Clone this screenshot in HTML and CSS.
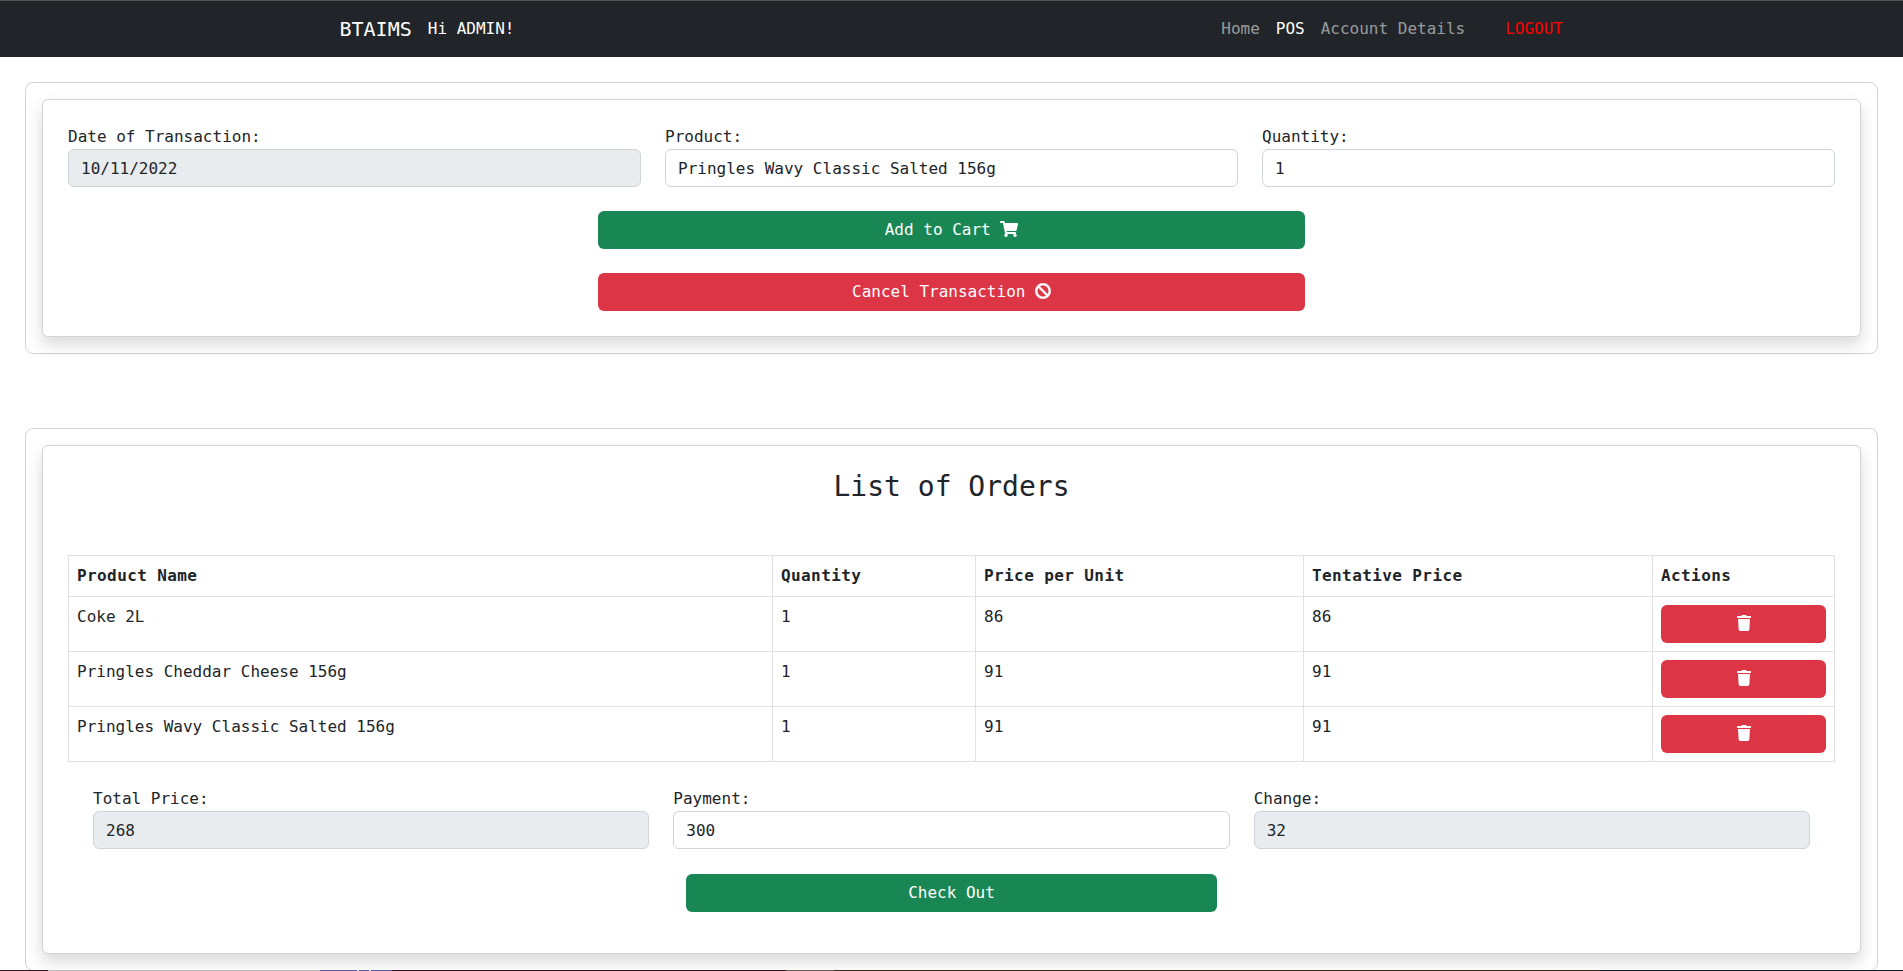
FILE: index.html
```html
<!DOCTYPE html>
<html lang="en">
<head>
<meta charset="utf-8">
<title>BTAIMS POS</title>
<link rel="stylesheet" href="styles.css">
</head>
<body>
<nav class="navbar">
  <div class="nav-left">
    <a class="brand">BTAIMS</a>
    <span class="greeting">Hi ADMIN!</span>
  </div>
  <div class="nav-right">
    <a class="nav-link">Home</a>
    <a class="nav-link active">POS</a>
    <a class="nav-link">Account Details</a>
    <a class="nav-link logout">LOGOUT</a>
  </div>
</nav>
<main class="page">
  <section class="outer">
    <div class="inner">
      <div class="fields">
        <div class="field"><label>Date of Transaction:</label><input class="input" value="10/11/2022" disabled></div>
        <div class="field"><label>Product:</label><input class="input" value="Pringles Wavy Classic Salted 156g"></div>
        <div class="field"><label>Quantity:</label><input class="input" value="1"></div>
      </div>
      <div class="actions">
        <button class="btn green wide">Add to Cart
          <svg class="icon" viewBox="0 0 576 512"><path d="M528.12 301.319l47.273-208C578.806 78.301 567.391 64 551.99 64H159.208l-9.166-44.81C147.758 8.021 137.93 0 126.529 0H24C10.745 0 0 10.745 0 24v16c0 13.255 10.745 24 24 24h69.883l70.248 343.435C147.325 417.1 136 435.222 136 456c0 30.928 25.072 56 56 56s56-25.072 56-56c0-15.674-6.447-29.835-16.824-40h209.647C430.447 426.165 424 440.326 424 456c0 30.928 25.072 56 56 56s56-25.072 56-56c0-22.172-12.888-41.332-31.579-50.405l5.517-24.276c3.413-15.018-8.002-29.319-23.403-29.319H218.117l-6.545-32h293.145c11.206 0 20.92-7.754 23.403-18.681z"/></svg>
        </button>
        <button class="btn red wide">Cancel Transaction
          <svg class="icon ban" viewBox="0 0 512 512"><path d="M256 8C119.034 8 8 119.033 8 256s111.034 248 248 248 248-111.034 248-248S392.967 8 256 8zm130.108 117.892c65.448 65.448 70 165.481 20.677 235.637L150.47 105.216c70.204-49.356 170.226-44.735 235.638 20.676zM125.892 386.108c-65.448-65.448-70-165.481-20.677-235.637L361.53 406.784c-70.203 49.356-170.226 44.736-235.638-20.676z"/></svg>
        </button>
      </div>
    </div>
  </section>
  <section class="outer orders">
    <div class="inner">
      <h3 class="title">List of Orders</h3>
      <table class="table">
        <colgroup>
          <col class="c1"><col class="c2"><col class="c3"><col class="c4"><col class="c5">
        </colgroup>
        <thead>
          <tr><th>Product Name</th><th>Quantity</th><th>Price per Unit</th><th>Tentative Price</th><th>Actions</th></tr>
        </thead>
        <tbody>
          <tr><td>Coke 2L</td><td>1</td><td>86</td><td>86</td><td><button class="btn red block"><svg class="icon" viewBox="0 0 448 512"><path d="M432 32H312l-9.4-18.7A24 24 0 0 0 281.1 0H166.8a23.72 23.72 0 0 0-21.4 13.3L136 32H16A16 16 0 0 0 0 48v32a16 16 0 0 0 16 16h416a16 16 0 0 0 16-16V48a16 16 0 0 0-16-16zM53.2 467a48 48 0 0 0 47.9 45h245.8a48 48 0 0 0 47.9-45L416 128H32z"/></svg></button></td></tr>
          <tr><td>Pringles Cheddar Cheese 156g</td><td>1</td><td>91</td><td>91</td><td><button class="btn red block"><svg class="icon" viewBox="0 0 448 512"><path d="M432 32H312l-9.4-18.7A24 24 0 0 0 281.1 0H166.8a23.72 23.72 0 0 0-21.4 13.3L136 32H16A16 16 0 0 0 0 48v32a16 16 0 0 0 16 16h416a16 16 0 0 0 16-16V48a16 16 0 0 0-16-16zM53.2 467a48 48 0 0 0 47.9 45h245.8a48 48 0 0 0 47.9-45L416 128H32z"/></svg></button></td></tr>
          <tr><td>Pringles Wavy Classic Salted 156g</td><td>1</td><td>91</td><td>91</td><td><button class="btn red block"><svg class="icon" viewBox="0 0 448 512"><path d="M432 32H312l-9.4-18.7A24 24 0 0 0 281.1 0H166.8a23.72 23.72 0 0 0-21.4 13.3L136 32H16A16 16 0 0 0 0 48v32a16 16 0 0 0 16 16h416a16 16 0 0 0 16-16V48a16 16 0 0 0-16-16zM53.2 467a48 48 0 0 0 47.9 45h245.8a48 48 0 0 0 47.9-45L416 128H32z"/></svg></button></td></tr>
        </tbody>
      </table>
      <div class="fields totals">
        <div class="field"><label>Total Price:</label><input class="input" value="268" disabled></div>
        <div class="field"><label>Payment:</label><input class="input" value="300"></div>
        <div class="field"><label>Change:</label><input class="input" value="32" disabled></div>
      </div>
      <div class="actions">
        <button class="btn green checkout">Check Out</button>
      </div>
    </div>
  </section>
</main>
<div class="edge-strip"></div>
</body>
</html>
```

FILE: styles.css
```css
* { box-sizing: border-box; }
html, body { margin: 0; height: 100%; overflow: hidden; background: #fff; }
body { position: relative; }
body, input, button {
  font-family: "DejaVu Sans Mono", "Liberation Mono", monospace;
  font-size: 16px;
  line-height: 24px;
  color: #212529;
}
.navbar {
  height: 57px;
  background: #212529;
  border-top: 1px solid #555;
  display: flex;
  align-items: center;
  justify-content: space-between;
  padding: 0 332px 0 339.5px;
}
.nav-left, .nav-right { display: flex; align-items: center; }
.brand { font-size: 20px; color: #fff; margin-right: 16px; }
.greeting { color: #fff; }
.nav-link { padding: 0 8px; color: rgba(255,255,255,.55); }
.nav-link.active { color: #fff; }
.nav-link.logout { color: #f00; margin-left: 24px; }
.page { padding: 25px 25px 0; }
.outer {
  border: 1px solid #d3d3d3;
  border-radius: 8px;
  padding: 16px;
  background: #fff;
}
.orders { margin-top: 74px; }
.inner {
  border: 1px solid #d3d3d3;
  border-radius: 6px;
  padding: 25px;
  background: #fff;
  box-shadow: 0 8px 16px rgba(0,0,0,.15);
}
.orders .inner { padding-bottom: 41px; }
.fields { display: grid; grid-template-columns: repeat(3, 1fr); column-gap: 24px; }
.field { display: flex; flex-direction: column; }
.input {
  height: 38px;
  width: 100%;
  padding: 6px 12px;
  border: 1px solid #ced4da;
  border-radius: 6px;
  background: #fff;
}
.input:disabled { background: #e9ecef; opacity: 1; }
.actions { display: flex; flex-direction: column; align-items: center; gap: 24px; margin-top: 24px; }
.btn {
  height: 38px;
  border: 0;
  border-radius: 6px;
  color: #fff;
  padding: 0 12px;
  display: inline-flex;
  align-items: center;
  justify-content: center;
  gap: 9.6px;
}
.green { background: #198754; }
.red { background: #dc3545; }
.wide { width: 707px; }
.checkout { width: 531px; margin-top: 1px; }
.block { width: 100%; }
.icon { height: 16px; fill: #fff; margin-bottom: 2px; }
.ban { stroke: #fff; stroke-width: 14px; }
.title {
  margin: 0;
  height: 84px;
  font-size: 28px;
  font-weight: 400;
  line-height: 32px;
  text-align: center;
}
.table { width: 100%; border-collapse: collapse; table-layout: fixed; }
.table th, .table td { border: 1px solid #dee2e6; padding: 8px; text-align: left; vertical-align: top; }
.table th { letter-spacing: .4px; }
.c1 { width: 704px; }
.c2 { width: 203px; }
.c3 { width: 328px; }
.c4 { width: 349px; }
.totals { padding: 0 25px; margin-top: 25px; }
.edge-strip {
  position: absolute;
  left: 0;
  right: 0;
  bottom: 0;
  height: 1px;
  background: linear-gradient(to right,
    #3d1420 0 48px, #b9b9b9 48px 320px, #5a5aa0 320px 357px, #e8e8f0 357px 359px,
    #5a5aa0 359px 369px, #e8e8f0 369px 371px, #5a5aa0 371px 392px,
    #3d1420 392px 786px, #6b5d55 786px 834px, #3a2a1a 834px 1600px, #10202a 1600px 100%);
}
```
